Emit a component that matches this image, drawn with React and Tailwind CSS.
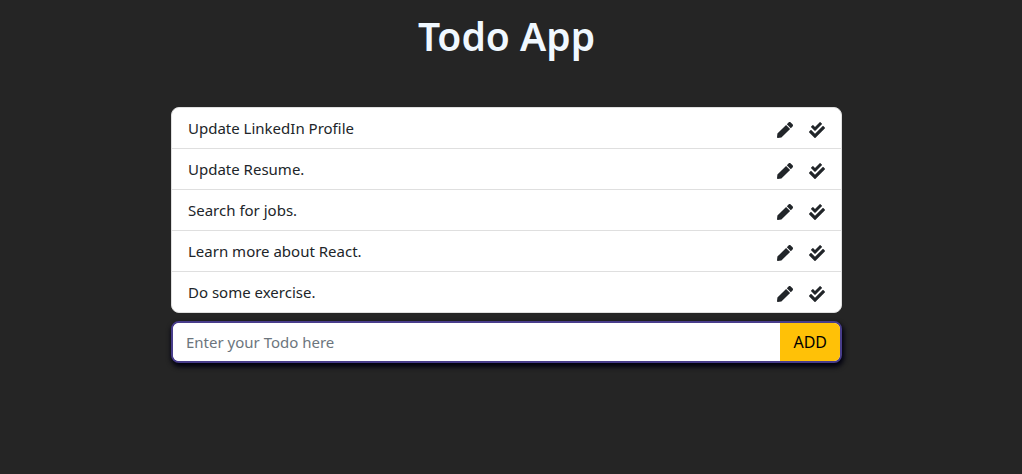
import { useState } from "react";
import { FaPen, FaCheckDouble } from "react-icons/fa";

const initialTodos = [
  "Update LinkedIn Profile",
  "Update Resume.",
  "Search for jobs.",
  "Learn more about React.",
  "Do some exercise.",
];

function TodoItem({ text, onEdit, onDone }) {
  return (
    <li className="flex items-center justify-between border-b border-[#dfdfdf] px-4 py-2 last:border-b-0">
      <span>{text}</span>
      <span className="flex items-center gap-4 pt-1">
        <button type="button" aria-label={`Edit ${text}`} onClick={onEdit}>
          <FaPen className="size-4" />
        </button>
        <button type="button" aria-label={`Complete ${text}`} onClick={onDone}>
          <FaCheckDouble className="size-4" />
        </button>
      </span>
    </li>
  );
}

export default function App() {
  const [todos, setTodos] = useState(initialTodos);
  const [draft, setDraft] = useState("");

  const remove = (index) => setTodos(todos.filter((_, i) => i !== index));

  const add = (event) => {
    event.preventDefault();
    if (!draft.trim()) return;
    setTodos([...todos, draft.trim()]);
    setDraft("");
  };

  return (
    <div className="min-h-screen bg-[#252525] pt-3 pr-[25px] pl-4 font-['Segoe_UI','Noto_Sans',sans-serif] text-[15px] leading-6 text-[#212529]">
      <h1 className="text-center text-[39px] leading-12 font-semibold text-[#f0f8ff]">Todo App</h1>
      <main className="mx-auto mt-[47px] max-w-[671px]">
        <ul className="overflow-hidden rounded-lg border border-[#dfdfdf] bg-white">
          {todos.map((todo, index) => (
            <TodoItem
              key={todo}
              text={todo}
              onDone={() => remove(index)}
              onEdit={() => {
                setDraft(todo);
                remove(index);
              }}
            />
          ))}
        </ul>
        <form
          onSubmit={add}
          className="mt-2 flex overflow-hidden rounded-lg border-2 border-[#483d8b] bg-white shadow-[1px_3px_5px_1px_#00000f]"
        >
          <input
            type="text"
            aria-label="New todo"
            placeholder="Enter your Todo here"
            value={draft}
            onChange={(event) => setDraft(event.target.value)}
            className="min-w-0 flex-1 bg-white px-[13px] py-[7px] outline-none placeholder:text-[#6c757d]"
          />
          <button type="submit" className="bg-[#ffc107] px-[13px] py-[7px] text-base leading-6 text-black">
            ADD
          </button>
        </form>
      </main>
    </div>
  );
}
